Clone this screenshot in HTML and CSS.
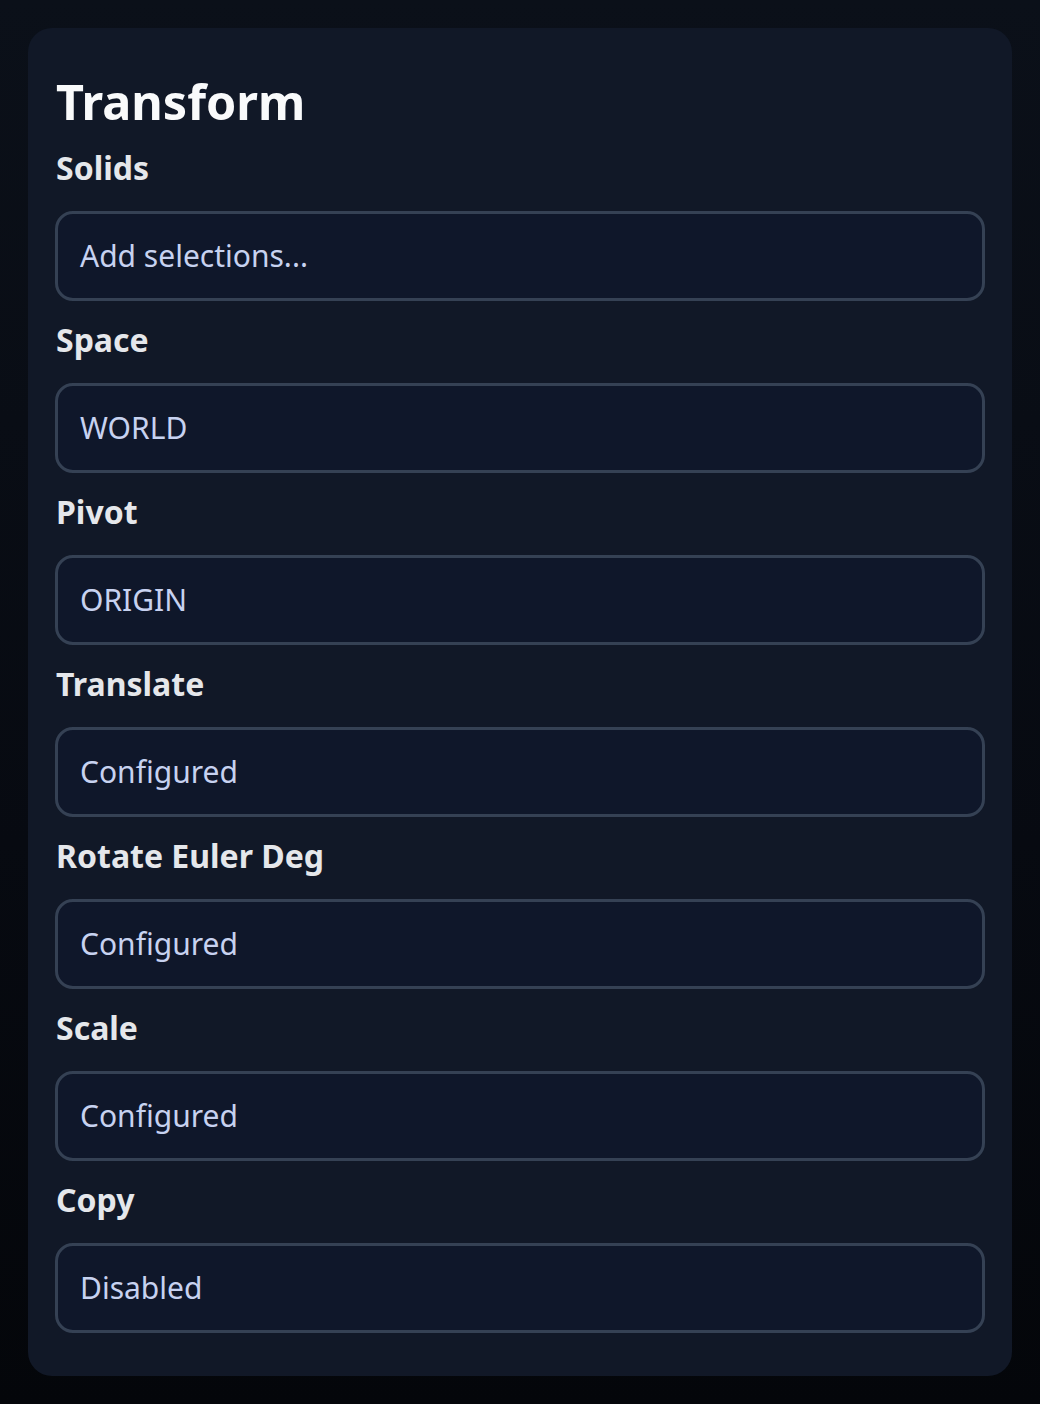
FILE: index.html
```html
<!DOCTYPE html>
<html lang="en">
<head>
<meta charset="utf-8">
<title>Transform</title>
<link rel="stylesheet" href="styles.css">
</head>
<body>
<section class="card">
  <h1 class="title">Transform</h1>
  <div class="fields">
    <div class="field">
      <div class="label">Solids</div>
      <div class="input">Add selections...</div>
    </div>
    <div class="field">
      <div class="label">Space</div>
      <div class="input">WORLD</div>
    </div>
    <div class="field">
      <div class="label">Pivot</div>
      <div class="input">ORIGIN</div>
    </div>
    <div class="field">
      <div class="label">Translate</div>
      <div class="input">Configured</div>
    </div>
    <div class="field">
      <div class="label">Rotate Euler Deg</div>
      <div class="input">Configured</div>
    </div>
    <div class="field">
      <div class="label">Scale</div>
      <div class="input">Configured</div>
    </div>
    <div class="field">
      <div class="label">Copy</div>
      <div class="input">Disabled</div>
    </div>
  </div>
</section>
</body>
</html>
```

FILE: styles.css
```css
html, body {
  margin: 0;
  padding: 0;
}
body {
  min-height: 1404px;
  box-sizing: border-box;
  padding: 28px;
  background: linear-gradient(180deg, #0b1019 0%, #070a11 60%, #04060a 100%);
  font-family: "Noto Sans", "Open Sans", sans-serif;
}
.card {
  background: #111827;
  border-radius: 24px;
  padding: 39px 28px 43px;
}
.title {
  margin: 0 0 12px;
  font-size: 48.5px;
  font-weight: 700;
  color: #f9fafb;
  line-height: 68px;
}
.fields {
  display: flex;
  flex-direction: column;
  gap: 18px;
}
.field {
  display: flex;
  flex-direction: column;
}
.label {
  font-size: 32px;
  font-weight: 700;
  color: #e5e7eb;
  line-height: 42px;
  margin-bottom: 22px;
}
.input {
  margin: 0 -1px;
  background: #0f172a;
  border: 3px solid #354154;
  border-radius: 18px;
  padding: 21px 22px;
  font-size: 30px;
  line-height: 42px;
  color: #c7d2f0;
}
```
